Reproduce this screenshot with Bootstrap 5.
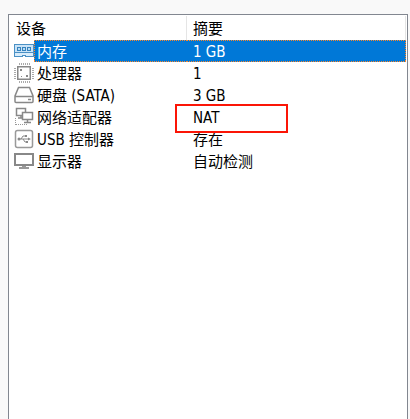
<!DOCTYPE html>
<html lang="zh-CN">
<head>
<meta charset="utf-8">
<meta name="viewport" content="width=device-width, initial-scale=1">
<title>设备</title>
<link href="https://cdn.jsdelivr.net/npm/bootstrap@5.3.0/dist/css/bootstrap.min.css" rel="stylesheet">
<style>
body { background: #f9f9f9; color: #000; font: 400 15px/20px "Noto Sans CJK SC", sans-serif; }
.page { padding: 14px 2px 0 8px; }
.panel { border: 1px solid #828790; border-bottom: 0; }
.devices { table-layout: fixed; border-collapse: separate; border-spacing: 0; }
.devices th, .devices td { padding: 0; height: 22px; font-weight: 400; }
.devices thead th { height: 25px; padding: 1px 0 0 7px; }
.devices thead span { display: block; border-right: 1px solid #e5e5e5; height: 24px; line-height: 24px; }
.devices thead th:last-child { padding-left: 6px; padding-right: 1px; }
.devices .name-col { width: 178px; }
.devices svg { width: 20px; height: 22px; margin-left: 5px; flex: none; }
.device-name, .summary { height: 22px; border: 1px solid transparent; white-space: nowrap; }
.device-name { padding-left: 2px; border-right: 0; }
.summary { padding-left: 6px; border-left: 0; margin-right: 1px; }
.latin { font-family: "DejaVu Sans Condensed", "Noto Sans", sans-serif; }
.selected .device-name, .selected .summary {
  --dots-x: repeating-linear-gradient(90deg, #ff8728 0 1px, #0078d7 1px 2px);
  --dots-y: repeating-linear-gradient(#ff8728 0 1px, #0078d7 1px 2px);
  background-color: #0078d7;
  background-image: var(--dots-x), var(--dots-x), var(--dots-y);
  background-origin: border-box;
  background-repeat: no-repeat;
  background-size: 100% 1px, 100% 1px, 1px 100%;
  background-position: left top, left bottom, left top;
  color: #fff;
}
.selected .summary { background-position: left top, left bottom, right top; }
.callout { left: -12px; top: -3px; width: 113px; height: 29px; border: 2px solid #fb1506; }
</style>
<script src="https://cdn.jsdelivr.net/npm/bootstrap@5.3.0/dist/js/bootstrap.bundle.min.js"></script>
</head>
<body>
<main class="page vh-100 d-flex">
<div class="panel bg-white flex-grow-1">
<table class="devices w-100">
<colgroup><col class="name-col"><col></colgroup>
<thead><tr><th scope="col"><span>设备</span></th><th scope="col"><span>摘要</span></th></tr></thead>
<tbody>
<tr class="selected">
<td><div class="d-flex"><svg viewBox="0 0 20 22" aria-hidden="true"><path d="M0 4h20v13H0z" fill="#4b91c5"/><path d="M1 5h18v7H1z" fill="#c9e3f7"/><path d="M1 13h18v3H1z" fill="#d9ecfa"/><path d="M8 15h4v2H8z" fill="#4b91c5"/><path d="M9 16h2v1H9z" fill="#fff"/><path d="M3 7h4v4H3zM8 7h4v4H8zM13 7h4v4h-4z" fill="#3583be"/><path d="M4 8h2v2H4zM9 8h2v2H9zM14 8h2v2h-2z" fill="#b9dcf5"/></svg><div class="device-name flex-grow-1">内存</div></div></td>
<td><div class="summary"><span class="latin">1 GB</span></div></td>
</tr>
<tr>
<td><div class="d-flex"><svg viewBox="0 0 20 22" aria-hidden="true"><g fill="none" stroke="#888"><path stroke-width="1.500" d="M3.750 4.750h12.500v12.500H3.750z"/><path stroke="#aaa" stroke-width="2" stroke-dasharray="1 1" d="M5 2h11M5 20h11M1 6v11M19 6v11"/></g><path d="M6 7h2v2H6zM12 13h2v2h-2zM7 14h1v1H7z" fill="#888"/></svg><div class="device-name flex-grow-1">处理器</div></div></td>
<td><div class="summary"><span class="latin">1</span></div></td>
</tr>
<tr>
<td><div class="d-flex"><svg viewBox="0 0 20 22" aria-hidden="true"><path d="M4.500 3.500h11L19 12v5.500q0 1-1 1H2q-1 0-1-1V12zM1 12.500h18" fill="none" stroke="#888" stroke-width="1.500"/><path d="M14 15.500h3" stroke="#888" stroke-width="1.500"/></svg><div class="device-name flex-grow-1">硬盘<span class="latin"> (SATA)</span></div></div></td>
<td><div class="summary"><span class="latin">3 GB</span></div></td>
</tr>
<tr>
<td><div class="d-flex"><svg viewBox="0 0 20 22" aria-hidden="true"><g fill="#fff" stroke="#888" stroke-width="1.500"><path d="M2.500 2.500h9v7h-9z"/><path d="M4 12h5M7 9.500v2"/><path d="M8.500 6.500h10v7h-10z"/><path d="M13.500 14v2M10 16.500h7"/></g><path d="M1.500 12v7M2 18.500h11" fill="none" stroke="#999" stroke-dasharray="1 1"/></svg><div class="device-name flex-grow-1">网络适配器</div></div></td>
<td><div class="summary position-relative"><span class="latin">NAT</span><div class="callout position-absolute"></div></div></td>
</tr>
<tr>
<td><div class="d-flex"><svg viewBox="0 0 20 22" aria-hidden="true"><rect x="1.500" y="2.500" width="17" height="17" rx="2" fill="none" stroke="#999" stroke-width="1.500"/><path d="M5 11h10M7 11l2-3h3M9 11l2 3h2" fill="none" stroke="#888"/><circle cx="5" cy="11" r="1.500" fill="#888"/><path d="M14 9.500l3 1.500-3 1.500zM11 7h2v2h-2zM12 13h2v2h-2z" fill="#888"/></svg><div class="device-name flex-grow-1"><span class="latin">USB </span>控制器</div></div></td>
<td><div class="summary">存在</div></td>
</tr>
<tr>
<td><div class="d-flex"><svg viewBox="0 0 20 22" aria-hidden="true"><path d="M1 4h18v11H1z" fill="#fff" stroke="#888" stroke-width="2"/><path d="M8 16h4v1h3v2H5v-2h3z" fill="#999"/></svg><div class="device-name flex-grow-1">显示器</div></div></td>
<td><div class="summary">自动检测</div></td>
</tr>
</tbody>
</table>
</div>
</main>
</body>
</html>
